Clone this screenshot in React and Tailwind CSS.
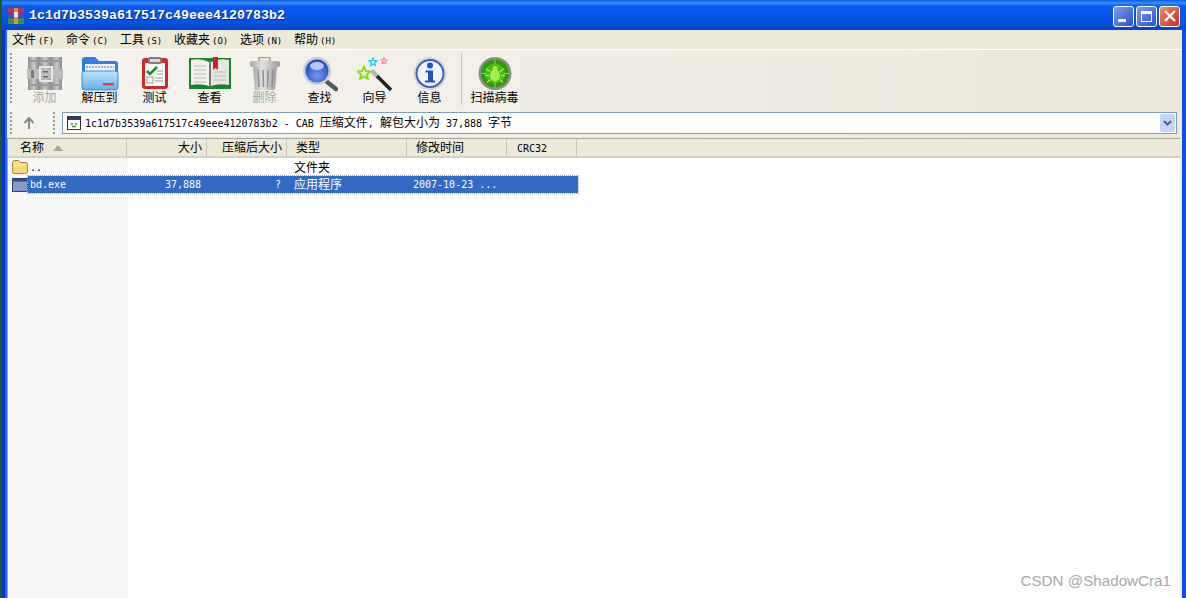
const sans = "font-['DejaVu_Sans_Mono','Noto_Sans_CJK_SC',monospace]";

const menus = [
  ["文件", "F", "w-[54px]"],
  ["命令", "C", "w-[54px]"],
  ["工具", "S", "w-[54px]"],
  ["收藏夹", "O", "w-[66px]"],
  ["选项", "N", "w-[54px]"],
  ["帮助", "H", "w-[54px]"],
];

const Archive = () => (
  <svg width="36" height="36" viewBox="0 0 36 36">
    <defs>
      <linearGradient id="rar" x1="0" x2="1" y1="0" y2="0">
        <stop offset="0" stopColor="#8a8a8a" />
        <stop offset="0.5" stopColor="#c8c8c8" />
        <stop offset="1" stopColor="#8a8a8a" />
      </linearGradient>
    </defs>
    <rect x="1" y="0" width="11" height="33" fill="url(#rar)" />
    <rect x="12" y="0" width="12" height="33" fill="url(#rar)" />
    <rect x="24" y="0" width="11" height="33" fill="url(#rar)" />
    <rect x="1" y="3" width="34" height="2" fill="#9a9a9a" />
    <rect x="1" y="27" width="34" height="2" fill="#9a9a9a" />
    <rect x="0" y="12" width="36" height="10" fill="#bdbdbd" />
    <rect x="4" y="13" width="3" height="8" rx="1" fill="#777" />
    <rect x="13" y="10" width="12" height="14" fill="none" stroke="#e8e8e8" strokeWidth="2" />
    <rect x="16" y="14" width="5" height="1.500" fill="#666" />
    <rect x="16" y="19" width="5" height="1.500" fill="#666" />
  </svg>
);

const Folder = () => (
  <svg width="38" height="36" viewBox="0 0 38 36">
    <defs>
      <linearGradient id="folderFront" x1="0" x2="0" y1="0" y2="1">
        <stop offset="0" stopColor="#c2e4fa" />
        <stop offset="1" stopColor="#62aeee" />
      </linearGradient>
    </defs>
    <path d="M1 3q0-3 3-3h10l4 4h16q3 0 3 3v8H1z" fill="#2f80e0" />
    <rect x="4" y="7" width="30" height="9" fill="#eef2f8" />
    <path d="M5 10h28" stroke="#a5b3c8" strokeDasharray="2 1" strokeWidth="2" />
    <path d="M1 16q0-2 3-2h30q3 0 3 2v14q0 3-3 3H4q-3 0-3-3z" fill="url(#folderFront)" stroke="#3f8fe0" />
    <rect x="22" y="26" width="11" height="2.500" fill="#e8452f" />
  </svg>
);

const Clipboard = () => (
  <svg width="26" height="36" viewBox="0 0 26 36">
    <rect x="0" y="1" width="26" height="31" rx="3" fill="#d0282c" />
    <rect x="3" y="6" width="20" height="23" fill="#fafaf4" />
    <rect x="6" y="0" width="14" height="7" rx="2" fill="#8a7a7a" />
    <rect x="8" y="2" width="10" height="3" fill="#dcdcdc" />
    <path d="M5 14l3 3 7-7" fill="none" stroke="#1f8a2d" strokeWidth="2.500" />
    <rect x="5" y="20" width="6" height="6" fill="none" stroke="#999" />
    <path d="M15 14h6M15 17h6M13 21h8M13 24h8" stroke="#999" />
  </svg>
);

const Book = () => (
  <svg width="42" height="36" viewBox="0 0 42 36">
    <path d="M0 1h42v31H0z" fill="#15842a" />
    <path d="M2 3q10-2 18 2v24q-8-3-18-1z" fill="#f2f2ea" />
    <path d="M40 3q-10-2-18 2v24q8-3 18-1z" fill="#e6e6de" />
    <rect x="20" y="4" width="2" height="26" fill="#777" />
    <path d="M5 9h12M5 13h12M5 17h12M5 21h12M5 25h12M25 15h12M25 19h12M25 23h12" stroke="#b5b5b5" />
    <path d="M24 0h5v13l-2.500-2-2.500 2z" fill="#c8242c" />
  </svg>
);

const Trash = () => (
  <svg width="32" height="36" viewBox="0 0 32 36">
    <defs>
      <linearGradient id="can" x1="0" x2="1" y1="0" y2="0">
        <stop offset="0" stopColor="#a8a8a8" />
        <stop offset="0.4" stopColor="#e2e2e2" />
        <stop offset="1" stopColor="#9c9c9c" />
      </linearGradient>
    </defs>
    <rect x="10" y="0.500" width="11" height="4" rx="1" fill="none" stroke="#9a9a9a" strokeWidth="1.500" />
    <rect x="1" y="4" width="30" height="6" rx="2" fill="url(#can)" />
    <path d="M4 10h24l-2 23H6z" fill="url(#can)" />
    <path d="M9 13l1 17M14 13l.5 17M19 13l-.5 17M24 13l-1 17" stroke="#8e8e8e" strokeWidth="1.500" />
  </svg>
);

const Search = () => (
  <svg width="36" height="36" viewBox="0 0 36 36">
    <defs>
      <radialGradient id="lens" cx="0.5" cy="0.7" r="0.7">
        <stop offset="0" stopColor="#6f9cf0" />
        <stop offset="1" stopColor="#1c44b8" />
      </radialGradient>
    </defs>
    <path d="M24 24l10 8" stroke="#55585c" strokeWidth="4.500" strokeLinecap="round" />
    <circle cx="15" cy="14" r="14" fill="#c8ccd2" />
    <circle cx="15" cy="14" r="11.500" fill="url(#lens)" />
    <ellipse cx="15" cy="9" rx="7" ry="4" fill="#b7c8ee" />
  </svg>
);

const Wand = () => (
  <svg width="36" height="36" viewBox="0 0 36 36">
    <path d="M15 14l19 19" stroke="#222" strokeWidth="3.500" />
    <path d="M15 14l5 5" stroke="#bbb" strokeWidth="3.500" />
    <path d="M7 8l1.800 4 4.200.5-3 3 .8 4.200-3.800-2.200-3.800 2.200.8-4.200-3-3 4.200-.5z" fill="none" stroke="#84e01c" strokeWidth="2" transform="translate(0 2)" />
    <path d="M14 1l1 2.500 2.700.3-2 2 .5 2.700-2.200-1.300-2.200 1.300.5-2.700-2-2 2.700-.3z" fill="none" stroke="#22d6f0" strokeWidth="1.500" transform="translate(2 0)" />
    <path d="M23 0l.8 1.800 2 .2-1.500 1.400.4 2-1.700-1-1.700 1 .4-2-1.500-1.400 2-.2z" fill="none" stroke="#f08a96" strokeWidth="1.200" transform="translate(4 1)" />
  </svg>
);

const Info = () => (
  <svg width="34" height="36" viewBox="0 0 34 36">
    <circle cx="17" cy="16.500" r="16.500" fill="#d5d8dc" />
    <circle cx="17" cy="16.500" r="13.500" fill="#f3f4f6" stroke="#3a62c8" strokeWidth="2" />
    <circle cx="17" cy="8.500" r="3" fill="#2450c8" />
    <path d="M12.500 13.500h7.500v10h2v2h-10v-2h3v-8h-2.500z" fill="#2450c8" />
  </svg>
);

const Bug = () => (
  <svg width="34" height="36" viewBox="0 0 34 36">
    <circle cx="17" cy="16.500" r="16.500" fill="#8b8f8b" />
    <circle cx="17" cy="16.500" r="14" fill="#2f9a10" />
    <circle cx="17" cy="16.500" r="10" fill="#46bc18" />
    <path d="M17 2.500v5M17 25.500v5M3 16.500h5M26 16.500h5" stroke="#86e040" />
    <ellipse cx="17" cy="18.500" rx="5" ry="6" fill="#a4ec50" />
    <circle cx="17" cy="11.500" r="2.500" fill="#a4ec50" />
    <path d="M12 14.500l-4-3M22 14.500l4-3M11 18.500H7M23 18.500h4M12 22.500l-3 3M22 22.500l3 3" stroke="#a4ec50" strokeWidth="1.300" />
  </svg>
);

const tools = [
  { label: "添加", icon: <Archive />, off: true },
  { label: "解压到", icon: <Folder /> },
  { label: "测试", icon: <Clipboard /> },
  { label: "查看", icon: <Book /> },
  { label: "删除", icon: <Trash />, off: true },
  { label: "查找", icon: <Search /> },
  { label: "向导", icon: <Wand /> },
  { label: "信息", icon: <Info /> },
];

const Tool = ({ label, icon, off }) => (
  <div className="w-[55px] flex flex-col items-center">
    <div className="h-[36px] flex items-center justify-center">{icon}</div>
    <p className={"mt-[-3px] h-[17px] leading-[17px] text-[12px] " + (off ? "text-[#a8a79c]" : "text-black")}>
      {label}
    </p>
  </div>
);

const Grip = ({ className }) => (
  <div
    className={"w-[2px] bg-[repeating-linear-gradient(to_bottom,#9c9b90_0,#9c9b90_2px,transparent_2px,transparent_4px)] " + className}
  />
);

const columns = [
  { label: "名称", className: "w-[119px] justify-start pl-[12px]" },
  { label: "大小", className: "w-[80px] justify-end pr-[4px]" },
  { label: "压缩后大小", className: "w-[80px] justify-end pr-[4px]" },
  { label: "类型", className: "w-[120px] justify-start pl-[9px]" },
  { label: "修改时间", className: "w-[100px] justify-start pl-[9px]" },
  { label: "CRC32", className: "w-[70px] justify-start pl-[10px]" },
];

const WinButton = ({ className, children }) => (
  <div className={"w-[21px] h-[21px] rounded-[3px] border border-white flex items-center justify-center " + className}>
    {children}
  </div>
);

export default function App() {
  return (
    <div className={"w-[1186px] h-[598px] overflow-hidden flex bg-[#0a4fe0] text-[12px] text-black " + sans}>
      {/* desktop peeking out on the left */}
      <div className="w-[2px] shrink-0 bg-[#1c5c1c]" />
      <div className="flex-1 min-w-0 flex flex-col">
        {/* title bar */}
        <div className="h-[30px] shrink-0 flex items-center pt-[2px] pl-[6px] pr-[6px] bg-[linear-gradient(to_bottom,#0a5ce0_0,#3a8efa_3px,#0a5aee_6px,#0553e2_22px,#0a44c4_30px)]">
          <svg width="16" height="16" viewBox="0 0 16 16" className="shrink-0">
            <rect x="0" y="0" width="16" height="5.500" fill="#b8305c" />
            <rect x="0" y="5.500" width="16" height="5" fill="#4a4ab0" />
            <rect x="0" y="10.500" width="16" height="5.500" fill="#2c9a3a" />
            <rect x="6" y="0" width="4" height="16" fill="#e88a30" />
            <rect x="6" y="4" width="4" height="5" fill="#f4f0e0" />
          </svg>
          <p className="ml-[5px] flex-1 font-['Liberation_Mono',monospace] font-bold text-[13.33px] text-white [text-shadow:1px_1px_0_#0a2a90]">
            1c1d7b3539a617517c49eee4120783b2
          </p>
          <div className="flex gap-[2px]">
            <WinButton className="bg-[linear-gradient(135deg,#7f9cf0,#2a50d0)]">
              <div className="w-[8px] h-[3px] bg-white mt-[8px] mr-[4px]" />
            </WinButton>
            <WinButton className="bg-[linear-gradient(135deg,#7f9cf0,#2a50d0)]">
              <div className="w-[11px] h-[11px] border border-t-[3px] border-white" />
            </WinButton>
            <WinButton className="bg-[linear-gradient(135deg,#ea8a70,#c83010)]">
              <svg width="12" height="12" viewBox="0 0 12 12">
                <path d="M1 1l10 10M11 1L1 11" stroke="#fff" strokeWidth="2.200" />
              </svg>
            </WinButton>
          </div>
        </div>

        {/* window frame: dark edge then lighter edge */}
        <div className="flex-1 min-h-0 flex pl-[5px] pr-[4px] bg-[linear-gradient(to_right,#0832d0_0,#0832d0_3px,#1f6af0_3px,#1f6af0_5px,#0a4fe0_5px)]">
          <div className="flex-1 min-w-0 flex flex-col bg-[#ece9d8]">
            {/* menu bar */}
            <div className="h-[19px] shrink-0 flex items-center border-b border-white box-content pl-[5px]">
              {menus.map(([name, key, width]) => (
                <p key={key} className={"whitespace-nowrap " + width}>
                  {name}
                  <span className="text-[9px] ml-[2px]">({key})</span>
                </p>
              ))}
            </div>

            {/* toolbar */}
            <div className="h-[57px] shrink-0 flex items-start pt-[7px] bg-[linear-gradient(to_right,#f4f3ee,#ece8da)]">
              <Grip className="h-[52px] ml-[3px] mt-[-4px]" />
              <div className="flex ml-[5px]">
                {tools.map((t) => (
                  <Tool key={t.label} {...t} />
                ))}
              </div>
              <div className="w-[1px] h-[52px] mt-[-4px] ml-[4px] bg-[#c5c2b0]" />
              <div className="ml-[5px]">
                <Tool label="扫描病毒" icon={<Bug />} />
              </div>
            </div>

            {/* address bar */}
            <div className="h-[30px] shrink-0 flex items-center pt-[2px] bg-[linear-gradient(to_right,#f4f3ee,#ece8da)]">
              <Grip className="h-[22px] ml-[3px]" />
              <svg width="14" height="14" viewBox="0 0 14 14" className="ml-[10px]">
                <path d="M7 2v11M2.500 7L7 2l4.500 5" fill="none" stroke="#8b8b85" strokeWidth="2" />
              </svg>
              <Grip className="h-[22px] ml-[17px]" />
              <div className="ml-[7px] mr-[5px] flex-1 h-[22px] flex items-center bg-white border border-[#7f9db9] pl-[4px] pr-[1px]">
                <svg width="14" height="14" viewBox="0 0 14 14" className="shrink-0">
                  <rect x="0.500" y="0.500" width="13" height="13" fill="#fff" stroke="#333" />
                  <rect x="1" y="1" width="12" height="3" fill="#2a3a88" />
                  <path d="M4 8h2M8 8h2M5 10.500h4" stroke="#3a8a3a" strokeWidth="1.500" />
                </svg>
                <p className="ml-[4px] flex-1 whitespace-pre text-[10px]">
                  1c1d7b3539a617517c49eee4120783b2 - CAB <span className="text-[12px]">压缩文件</span>, <span className="text-[12px]">解包大小为</span> 37,888 <span className="text-[12px]">字节</span>
                </p>
                <div className="w-[15px] h-[18px] rounded-[2px] bg-[#c3d4f8] flex items-center justify-center">
                  <svg width="9" height="7" viewBox="0 0 9 7">
                    <path d="M1 1l3.500 3.500L8 1" fill="none" stroke="#4d6185" strokeWidth="2" />
                  </svg>
                </div>
              </div>
            </div>

            {/* file list */}
            <div className="flex-1 min-h-0 mt-[1px] mr-[2px] flex flex-col bg-white border-t border-l border-[#aca899] relative">
              <div className="h-[19px] shrink-0 flex bg-[#ece9d8] shadow-[inset_0_-2px_0_#d6d2c2]">
                {columns.map((c) => (
                  <div
                    key={c.label}
                    className={"h-[18px] flex items-center border-r border-[#c7c5b2] " + c.className}
                  >
                    <span className={c.label === "CRC32" ? "text-[10px]" : ""}>{c.label}</span>
                    {c.label === "名称" && (
                      <svg width="10" height="6" viewBox="0 0 10 6" className="ml-[9px]">
                        <path d="M5 0l5 6H0z" fill="#aca899" />
                      </svg>
                    )}
                  </div>
                ))}
              </div>
              <div className="flex-1 min-h-0 flex">
                <div className="w-[120px] bg-[#f7f7f7] flex flex-col">
                  <div className="h-[18px] flex items-center pl-[4px]">
                    <svg width="16" height="14" viewBox="0 0 16 14">
                      <path d="M.500 2.500q0-2 2-2h4l2 2h5q2 0 2 2v7q0 2-2 2h-11q-2 0-2-2z" fill="#f8d774" stroke="#a5822c" />
                      <path d="M2 5h12" stroke="#fff6c8" />
                    </svg>
                    <span className="ml-[2px] text-[10px]">..</span>
                  </div>
                  <div className="h-[18px] flex items-center pl-[4px]">
                    <svg width="16" height="14" viewBox="0 0 16 14">
                      <rect x="0.500" y="0.500" width="15" height="13" fill="#7f9bd0" stroke="#33415e" />
                      <rect x="1" y="1" width="14" height="2.500" fill="#2d4a8a" />
                    </svg>
                  </div>
                </div>
                <div className="flex-1 flex flex-col">
                  <div className="h-[18px] flex items-center pt-[1px]">
                    <span className="ml-[166px]">文件夹</span>
                  </div>
                </div>
              </div>
              {/* selected row sits over the name column */}
              <div className="absolute left-[20px] top-[37px] w-[550px] h-[17px] flex items-center bg-[#316ac5] outline-1 outline-dotted outline-[#e8a33c] text-white text-[10px]">
                <span className="w-[99px] pl-[2px]">bd.exe</span>
                <span className="w-[80px] text-right pr-[6px]">37,888</span>
                <span className="w-[80px] text-right pr-[6px]">?</span>
                <span className="w-[120px] pl-[7px] text-[12px]">应用程序</span>
                <span className="pl-[6px] whitespace-pre">2007-10-23 ...</span>
              </div>
              {/* CSDN watermark */}
              <p className="absolute right-[9px] bottom-[5px] font-['Liberation_Sans',sans-serif] text-[15.200px] text-[#a8a8a8]">
                CSDN @ShadowCra1
              </p>
            </div>
          </div>
        </div>
      </div>
    </div>
  );
}
